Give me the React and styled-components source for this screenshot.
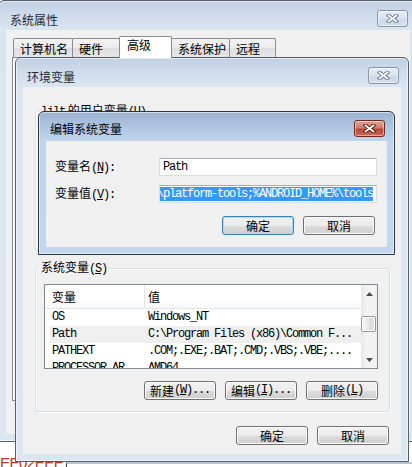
import React from "react";
import styled, { createGlobalStyle } from "styled-components";

const GlobalStyle = createGlobalStyle`
  html, body { margin: 0; padding: 0; background: #fff; }
  body {
    font-family: "Noto Sans CJK SC", "Liberation Sans", sans-serif;
    font-size: 12px;
    color: #000;
  }
  * { box-sizing: border-box; }
`;

const Desktop = styled.div`
  position: relative;
  width: 412px;
  height: 467px;
  overflow: hidden;
  background: #fff;
`;

const PageText = styled.div`
  position: absolute;
  left: 0;
  top: 455px;
  font-family: "Liberation Sans", sans-serif;
  font-size: 15px;
  line-height: 16px;
  color: #b23a2c;
  letter-spacing: -0.5px;
`;

const BackWindow = styled.div`
  position: absolute;
  left: 66px;
  top: 462px;
  width: 360px;
  height: 20px;
  border-left: 1px solid #3a3a3a;
  border-top: 2px solid #b9c4d2;
  background: #fff;
`;

const Frame = styled.div`
  position: absolute;
  left: ${(p) => p.$x}px;
  top: ${(p) => p.$y}px;
  width: ${(p) => p.$w}px;
  height: ${(p) => p.$h}px;
  display: flex;
  flex-direction: column;
  padding: 0 7px 7px;
  border: 1px solid ${(p) => (p.$active ? "#2c3440" : "#56606c")};
  border-radius: 6px 6px 0 0;
  background: ${(p) =>
    p.$active
      ? "linear-gradient(180deg, #9ab3d3 0px, #b3c9e4 18px, #c0d5ec 29px, #c2d7ee 100%)"
      : "linear-gradient(180deg, #c1d0e3 0px, #d3dfee 18px, #dae5f2 29px, #dce6f3 100%)"};
  box-shadow: inset 0 0 0 1px rgba(255, 255, 255, 0.55);
`;

const TitleBar = styled.div`
  height: 29px;
  display: flex;
  align-items: flex-start;
  justify-content: space-between;
  padding: 0 2px 0 4px;
`;

const Title = styled.div`
  margin-top: ${(p) => (p.$active ? 9 : 11)}px;
  line-height: 16px;
  color: ${(p) => (p.$active ? "#000" : "#2a2a2a")};
`;

const CloseBtn = styled.div`
  margin-top: ${(p) => (p.$active ? 8 : 9)}px;
  width: 31px;
  height: 17px;
  display: flex;
  align-items: center;
  justify-content: center;
  border-radius: 3px;
  border: 1px solid ${(p) => (p.$active ? "#6f2b22" : "#8795a8")};
  background: ${(p) =>
    p.$active
      ? "linear-gradient(180deg, #e3a296 0%, #d17b6c 45%, #bd4534 55%, #cf6b58 100%)"
      : "linear-gradient(180deg, #e6edf5 0%, #d8e2ee 50%, #cbd7e6 51%, #d5dfeb 100%)"};
  box-shadow: inset 0 0 0 1px rgba(255, 255, 255, 0.45);
`;

const Client = styled.div`
  flex: 1;
  display: flex;
  flex-direction: column;
  background: #f0f0f0;
  overflow: hidden;
`;

function CloseGlyph({ active }) {
  const d = "M2.5 1.5 L10.5 7.5 M10.5 1.5 L2.5 7.5";
  return (
    <svg width="13" height="9" viewBox="0 0 13 9">
      <path d={d} stroke={active ? "#5a1a12" : "#66758a"} strokeWidth="3.6" strokeLinecap="square" fill="none" />
      <path d={d} stroke="#fff" strokeWidth="1.7" strokeLinecap="square" fill="none" />
    </svg>
  );
}

function Window({ title, x, y, w, h, active, children }) {
  return (
    <Frame $x={x} $y={y} $w={w} $h={h} $active={active}>
      <TitleBar>
        <Title $active={active}>{title}</Title>
        <CloseBtn $active={active}>
          <CloseGlyph active={active} />
        </CloseBtn>
      </TitleBar>
      <Client>{children}</Client>
    </Frame>
  );
}

const Lat = styled.span`
  font-family: "Liberation Mono", "DejaVu Sans Mono", monospace;
  font-size: 12px;
  letter-spacing: -1.2px;
`;

const Key = styled.span`
  text-decoration: underline;
  text-underline-offset: 1px;
`;

const Button = styled.button`
  width: 72px;
  height: 19px;
  padding: 0;
  display: flex;
  align-items: center;
  justify-content: center;
  font-family: "Noto Sans CJK SC", sans-serif;
  font-size: 12px;
  line-height: 15px;
  color: #000;
  white-space: nowrap;
  border: 1px solid ${(p) => (p.$focus ? "#3c7fb1" : "#707070")};
  border-radius: 3px;
  background: linear-gradient(180deg, #f2f2f2 0%, #ebebeb 50%, #dddddd 51%, #cfcfcf 100%);
  box-shadow: inset 0 0 0 1px ${(p) => (p.$focus ? "#a7dcf7" : "#fbfbfb")};
`;

const ButtonRow = styled.div`
  display: flex;
  justify-content: flex-end;
  gap: 9px;
  margin-top: ${(p) => p.$top || 0}px;
  margin-right: ${(p) => p.$right || 0}px;
`;

/* ---------- 系统属性 ---------- */

const TabArea = styled.div`
  padding: 6px 6px 0 6px;
`;

const TabStrip = styled.div`
  height: 21px;
  display: flex;
  align-items: flex-end;
  padding-left: 2px;
`;

const Tab = styled.div`
  position: relative;
  width: ${(p) => p.$w}px;
  height: ${(p) => (p.$on ? 22 : 19)}px;
  margin-left: -1px;
  margin-bottom: ${(p) => (p.$on ? -1 : 0)}px;
  z-index: ${(p) => (p.$on ? 1 : 0)};
  padding: ${(p) => (p.$on ? "0 0 0 7px" : "2px 0 0 6px")};
  border: 1px solid #898c95;
  border-bottom: none;
  border-radius: 2px 2px 0 0;
  line-height: 16px;
  background: ${(p) => (p.$on ? "#fff" : "linear-gradient(180deg, #f3f3f3 0%, #ebebeb 50%, #dedede 51%, #e6e6e6 100%)")};
`;

const TabPanel = styled.div`
  height: 344px;
  border: 1px solid #898c95;
  background: #fff;
`;

/* ---------- 环境变量 ---------- */

const EnvBody = styled.div`
  display: flex;
  flex-direction: column;
  padding: 15px 11px 0 12px;
`;

const Group = styled.fieldset`
  margin: ${(p) => p.$top || 0}px 0 0;
  padding: 0 12px 11px 8px;
  min-width: 0;
  height: ${(p) => (p.$h ? `${p.$h}px` : "auto")};
  border: 1px solid #d5dfe5;
  border-radius: 3px;
  box-shadow: inset 1px 1px 0 #fff, 1px 1px 0 #fff;
  display: flex;
  flex-direction: column;
`;

const Legend = styled.legend`
  margin-left: -5px;
  padding: 0 2px;
  line-height: 16px;
  color: #000;
  white-space: nowrap;
`;

const ListView = styled.div`
  margin-top: 7px;
  width: 334px;
  height: 85px;
  display: flex;
  border: 1px solid #828790;
  background: #fff;
  overflow: hidden;
`;

const ListMain = styled.div`
  flex: 1;
  display: flex;
  flex-direction: column;
  min-width: 0;
`;

const Header = styled.div`
  flex: 0 0 24px;
  display: flex;
  border-bottom: 1px solid #e5e5e5;
  background: linear-gradient(180deg, #ffffff 0%, #ffffff 60%, #f7f8fa 100%);
  line-height: 23px;
`;

const HeadCell = styled.div`
  width: ${(p) => (p.$w ? `${p.$w}px` : "auto")};
  flex: ${(p) => (p.$w ? "0 0 auto" : "1")};
  padding-left: ${(p) => p.$pad}px;
  border-right: ${(p) => (p.$w ? "1px solid #e5e5e5" : "none")};
  font-size: 12px;
`;

const Row = styled.div`
  flex: 0 0 17px;
  display: flex;
  margin-left: 5px;
  line-height: 17px;
  white-space: nowrap;
  background: ${(p) => (p.$hot ? "#efefef" : "transparent")};
`;

const Cell = styled(Lat)`
  display: block;
  width: ${(p) => (p.$w ? `${p.$w}px` : "auto")};
  flex: ${(p) => (p.$w ? "0 0 auto" : "1")};
  padding-left: ${(p) => p.$pad}px;
  overflow: hidden;
`;

const ScrollBar = styled.div`
  flex: 0 0 16px;
  display: flex;
  flex-direction: column;
  background: linear-gradient(90deg, #e8e8e8 0%, #f4f4f4 40%, #f1f1f1 100%);
`;

const Arrow = styled.div`
  flex: 0 0 17px;
  display: flex;
  align-items: center;
  justify-content: center;
`;

const Track = styled.div`
  flex: 1;
`;

const Thumb = styled.div`
  margin: 14px 0 0 0;
  width: 15px;
  height: 16px;
  border: 1px solid #979797;
  border-radius: 2px;
  background: linear-gradient(90deg, #f5f5f5 0%, #e9e9e9 50%, #dadada 51%, #e2e2e2 100%);
  box-shadow: inset 0 0 0 1px #fafafa;
`;

/* ---------- 编辑系统变量 ---------- */

const EditBody = styled.div`
  display: flex;
  flex-direction: column;
  gap: 9px;
  padding: 17px 10px 0 9px;
`;

const FieldRow = styled.div`
  display: flex;
  align-items: center;
  height: 18px;
`;

const FieldLabel = styled.div`
  width: 104px;
  line-height: 16px;
  white-space: nowrap;
`;

const TextBox = styled.div`
  width: 218px;
  height: 18px;
  display: flex;
  align-items: center;
  justify-content: ${(p) => (p.$scrolled ? "flex-end" : "flex-start")};
  padding: 0 3px 0 3px;
  border: 1px solid #dadde3;
  border-top-color: #abadb3;
  background: #fff;
  overflow: hidden;
  white-space: nowrap;
  line-height: 14px;
`;

const Selected = styled(Lat)`
  flex: 0 0 auto;
  background: #3399ff;
  color: #fff;
`;

function ArrowGlyph({ down }) {
  return (
    <svg width="7" height="4" viewBox="0 0 7 4">
      <path d={down ? "M0 0 H7 L3.5 4 Z" : "M0 4 H7 L3.5 0 Z"} fill="#4a4a4a" />
    </svg>
  );
}

const vars = [
  { name: "OS", value: "Windows_NT" },
  { name: "Path", value: "C:\\Program Files (x86)\\Common F...", hot: true },
  { name: "PATHEXT", value: ".COM;.EXE;.BAT;.CMD;.VBS;.VBE;...." },
  { name: "PROCESSOR_AR", value: "AMD64" },
];

export default function App() {
  return (
    <Desktop>
      <GlobalStyle />
      <PageText>EE02EEE7;</PageText>
      <BackWindow />

      <Window title="系统属性" x={-2} y={0} w={420} h={442}>
        <TabArea>
          <TabStrip>
            <Tab $w={60}>计算机名</Tab>
            <Tab $w={48}>硬件</Tab>
            <Tab $w={53} $on>高级</Tab>
            <Tab $w={59}>系统保护</Tab>
            <Tab $w={47}>远程</Tab>
          </TabStrip>
          <TabPanel />
        </TabArea>
      </Window>

      <Window title="环境变量" x={15} y={57} w={394} h={405}>
        <EnvBody>
          <Group $h={150}>
            <Legend>
              <Lat>lilt</Lat> 的用户变量<Lat>(<Key>U</Key>)</Lat>
            </Legend>
          </Group>
          <Group $top={7}>
            <Legend>
              系统变量<Lat>(<Key>S</Key>)</Lat>
            </Legend>
            <ListView>
              <ListMain>
                <Header>
                  <HeadCell $w={100} $pad={7}>变量</HeadCell>
                  <HeadCell $pad={3}>值</HeadCell>
                </Header>
                {vars.map((v) => (
                  <Row key={v.name} $hot={v.hot}>
                    <Cell $w={94} $pad={2}>{v.name}</Cell>
                    <Cell $pad={4}>{v.value}</Cell>
                  </Row>
                ))}
              </ListMain>
              <ScrollBar>
                <Arrow><ArrowGlyph /></Arrow>
                <Track><Thumb /></Track>
                <Arrow><ArrowGlyph down /></Arrow>
              </ScrollBar>
            </ListView>
            <ButtonRow $top={12} $right={-1}>
              <Button>新建<Lat>(<Key>W</Key>)...</Lat></Button>
              <Button>编辑<Lat>(<Key>I</Key>)...</Lat></Button>
              <Button>删除<Lat>(<Key>L</Key>)</Lat></Button>
            </ButtonRow>
          </Group>
          <ButtonRow $top={14} $right={1}>
            <Button>确定</Button>
            <Button>取消</Button>
          </ButtonRow>
        </EnvBody>
      </Window>

      <Window title="编辑系统变量" x={38} y={111} w={357} h={144} active>
        <EditBody>
          <FieldRow>
            <FieldLabel>变量名<Lat>(<Key>N</Key>):</Lat></FieldLabel>
            <TextBox><Lat>Path</Lat></TextBox>
          </FieldRow>
          <FieldRow>
            <FieldLabel>变量值<Lat>(<Key>V</Key>):</Lat></FieldLabel>
            <TextBox $scrolled>
              <Selected>%ANDROID_HOME%\platform-tools;%ANDROID_HOME%\tools</Selected>
            </TextBox>
          </FieldRow>
          <ButtonRow $top={4} $right={2}>
            <Button $focus>确定</Button>
            <Button>取消</Button>
          </ButtonRow>
        </EditBody>
      </Window>
    </Desktop>
  );
}
